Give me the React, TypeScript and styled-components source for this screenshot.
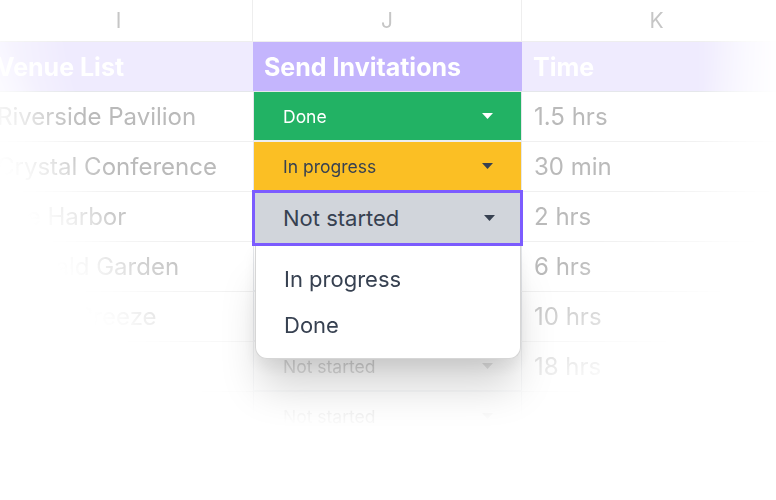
import styled, { createGlobalStyle } from "styled-components";

const GlobalStyle = createGlobalStyle`
  html, body {
    margin: 0;
    background: #ffffff;
    font-family: Inter, "Noto Sans", sans-serif;
  }
`;

type Status = "done" | "progress" | "idle";

const statusColors: Record<Status, { bg: string; fg: string; caret: string }> = {
  done: { bg: "#22b264", fg: "#ffffff", caret: "#ffffff" },
  progress: { bg: "#fbbf24", fg: "#374151", caret: "#374151" },
  idle: { bg: "#ffffff", fg: "#b5b5b5", caret: "#c9c9c9" },
};

// sheet box starts 15px left of the page: fade down, fade right, fade bottom-left corner
const fade = `radial-gradient(ellipse 460px 440px at 405px 0px, #000 71%, transparent 99%),
  linear-gradient(to right, #000 712px, transparent 798px),
  linear-gradient(60deg, transparent 150px, #000 222px)`;

const Page = styled.div`
  position: relative;
  width: 776px;
  height: 500px;
  overflow: hidden;
`;

const Sheet = styled.div`
  display: grid;
  grid-template-columns: 268px 269px 269px;
  grid-template-rows: 42px 50px;
  grid-auto-rows: 50px;
  margin-left: -15px;
  -webkit-mask-image: ${fade};
  -webkit-mask-composite: source-in;
  mask-image: ${fade};
  mask-composite: intersect;
`;

const ColLetter = styled.div<{ $last?: boolean }>`
  display: flex;
  align-items: center;
  justify-content: center;
  font-size: 21px;
  color: #c6c6c6;
  border-right: ${(p) => (p.$last ? "none" : "1px solid #eeeeee")};
  border-bottom: 1px solid #eeeeee;
`;

const HeaderCell = styled.div<{ $accent?: boolean }>`
  display: flex;
  align-items: center;
  padding: 0 11px;
  background: ${(p) => (p.$accent ? "#c4b5fd" : "#efebfe")};
  color: #ffffff;
  font-size: 25px;
  font-weight: 700;
  white-space: nowrap;
  border-bottom: 1px solid #e5e7eb;
`;

const TextCell = styled.div`
  display: flex;
  align-items: center;
  padding: 0 12px;
  font-size: 24px;
  color: #bababa;
  white-space: nowrap;
  border-bottom: 1px solid #f0f0f0;
`;

const StatusCell = styled.div<{ $status: Status }>`
  display: flex;
  align-items: center;
  justify-content: space-between;
  padding: 0 28px 0 29px;
  background: ${(p) => statusColors[p.$status].bg};
  color: ${(p) => statusColors[p.$status].fg};
  font-size: 17.5px;
  border-left: 1px solid #e5e7eb;
  border-right: 1px solid #e5e7eb;
  border-bottom: 2px solid #eceef1;
`;

const EditingCell = styled.div`
  position: relative;
  z-index: 1;
  display: flex;
  align-items: center;
  justify-content: space-between;
  height: 56px;
  margin: -2px -1px 0 -1px;
  padding: 0 25px 0 28px;
  box-sizing: border-box;
  background: #d1d5db;
  border: 3px solid #7c5cff;
  color: #374151;
  font-size: 22px;
`;

const Dropdown = styled.ul`
  position: absolute;
  left: 255px;
  top: 246px;
  width: 266px;
  height: 113px;
  box-sizing: border-box;
  margin: 0;
  padding: 10px 0 0;
  list-style: none;
  background: #ffffff;
  border: 1px solid #d6d6d6;
  border-top: none;
  border-radius: 0 0 12px 12px;
  box-shadow: 0 34px 40px -6px rgba(0, 0, 0, 0.17), 0 8px 16px rgba(0, 0, 0, 0.07);
`;

const Option = styled.li`
  display: flex;
  align-items: center;
  height: 46px;
  padding: 0 28px;
  font-size: 22px;
  color: #374151;
`;

function Caret({ color }: { color: string }) {
  return (
    <svg width="11" height="6" viewBox="0 0 11 6">
      <path d="M0 0h11L5.5 6z" fill={color} />
    </svg>
  );
}

const venues = ["Riverside Pavilion", "Crystal Conference", "The Harbor", "Emerald Garden", "Ocean Breeze", "", ""];
const times = ["1.5 hrs", "30 min", "2 hrs", "6 hrs", "10 hrs", "18 hrs", ""];
const statuses: (Status | "editing")[] = ["done", "progress", "editing", "idle", "idle", "idle", "idle"];
const labels: Record<Status | "editing", string> = {
  done: "Done",
  progress: "In progress",
  editing: "Not started",
  idle: "Not started",
};

export default function App() {
  return (
    <Page>
      <GlobalStyle />
      <Sheet>
        <ColLetter>I</ColLetter>
        <ColLetter>J</ColLetter>
        <ColLetter $last>K</ColLetter>

        <HeaderCell>Venue List</HeaderCell>
        <HeaderCell $accent>Send Invitations</HeaderCell>
        <HeaderCell>Time</HeaderCell>

        {venues.map((venue, i) => {
          const status = statuses[i];
          return [
            <TextCell key={`i${i}`}>{venue}</TextCell>,
            status === "editing" ? (
              <EditingCell key={`j${i}`}>
                {labels[status]}
                <Caret color="#374151" />
              </EditingCell>
            ) : (
              <StatusCell key={`j${i}`} $status={status}>
                {labels[status]}
                <Caret color={statusColors[status].caret} />
              </StatusCell>
            ),
            <TextCell key={`k${i}`}>{times[i]}</TextCell>,
          ];
        })}
      </Sheet>

      <Dropdown>
        <Option>In progress</Option>
        <Option>Done</Option>
      </Dropdown>
    </Page>
  );
}
